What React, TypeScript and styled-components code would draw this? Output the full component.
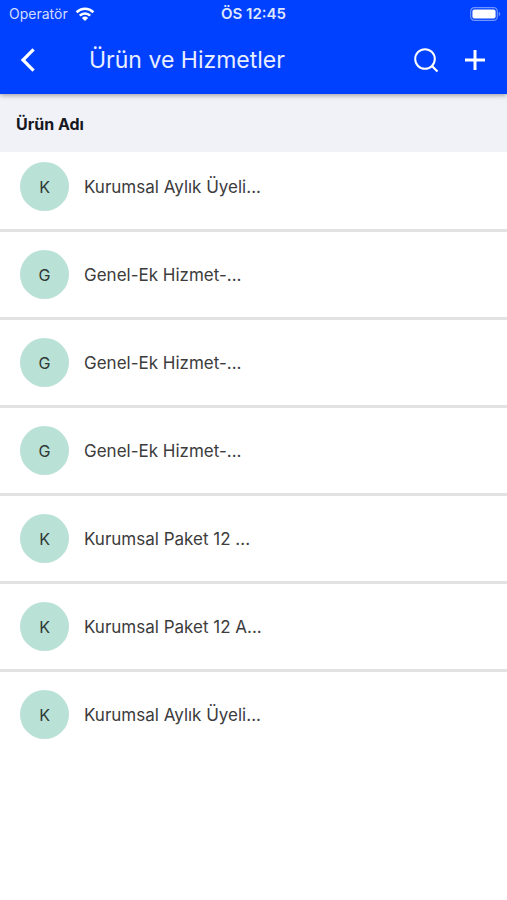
import React from "react";
import styled, { createGlobalStyle } from "styled-components";

const GlobalStyle = createGlobalStyle`
  *, *::before, *::after { box-sizing: border-box; }
  body {
    margin: 0;
    background: #fff;
    font-family: Inter, "Liberation Sans", sans-serif;
  }
`;

const Header = styled.header`
  position: relative;
  background: #0040ff;
  color: #fff;
  box-shadow: 0 1px 5px rgba(0, 0, 0, 0.4);
`;

const StatusBar = styled.div`
  display: grid;
  grid-template-columns: 1fr auto 1fr;
  align-items: center;
  height: 27px;
  padding: 0 6px;
  line-height: 20px;
`;

const Carrier = styled.div`
  display: flex;
  align-items: center;
  gap: 7px;
  padding-left: 3px;
  font-size: 14px;
  color: #d3deff;
`;

const Clock = styled.time`
  font-size: 15px;
  font-weight: 600;
  color: #dfe7ff;
`;

const BatterySlot = styled.div`
  display: flex;
  justify-content: flex-end;
`;

const Toolbar = styled.div`
  display: flex;
  align-items: center;
  height: 67px;
  padding: 0 8px 2px 4px;
`;

const IconButton = styled.button`
  display: flex;
  align-items: center;
  justify-content: center;
  width: 48px;
  height: 48px;
  padding: 0;
  border: 0;
  background: none;
  color: inherit;
  cursor: pointer;
`;

const Title = styled.h1`
  flex: 1;
  margin: 0;
  padding-left: 37px;
  font-size: 23px;
  line-height: 32px;
  font-weight: 400;
  color: #e9eeff;
`;

const Actions = styled.div`
  display: flex;
  gap: 1px;
`;

const ColumnHeading = styled.h2`
  margin: 0;
  padding: 18px 16px 16px;
  background: #f0f2f7;
  color: #17181f;
  font-size: 16px;
  line-height: 24px;
  font-weight: 700;
`;

const List = styled.ul`
  margin: 0;
  padding: 0;
  list-style: none;
`;

const Row = styled.li`
  display: flex;
  align-items: center;
  gap: 15px;
  padding: 18px 20px;
  border-bottom: 3px solid #e2e2e2;

  &:first-child { padding-top: 10px; }
  &:last-child { border-bottom: 0; }
`;

const Avatar = styled.span`
  display: flex;
  flex: none;
  align-items: center;
  justify-content: center;
  width: 49px;
  height: 49px;
  border-radius: 50%;
  background: #bae1d6;
  color: #2e3935;
  font-size: 16px;
  line-height: 24px;
`;

const ItemName = styled.span`
  color: #3c3c3c;
  font-size: 17px;
  line-height: 24px;
`;

const items = [
  "Kurumsal Aylık Üyeli...",
  "Genel-Ek Hizmet-...",
  "Genel-Ek Hizmet-...",
  "Genel-Ek Hizmet-...",
  "Kurumsal Paket 12 ...",
  "Kurumsal Paket 12 A...",
  "Kurumsal Aylık Üyeli...",
];

const WifiIcon = () => (
  <svg width="20" height="14" viewBox="0 0 20 14" fill="none" stroke="#fff" strokeWidth="2.6" aria-hidden="true">
    <path d="M1.6 5.2a12 12 0 0 1 16.8 0" />
    <path d="M4.8 8.6a7.4 7.4 0 0 1 10.4 0" />
    <path d="M10 14 6.9 10.9a4.4 4.4 0 0 1 6.2 0z" fill="#fff" stroke="none" />
  </svg>
);

const BatteryIcon = () => (
  <svg width="31" height="14" viewBox="0 0 31 14" fill="none" aria-hidden="true">
    <rect x="0.7" y="0.7" width="26.6" height="12.6" rx="3.6" stroke="#7095ff" strokeWidth="1.2" />
    <rect x="2.4" y="2.4" width="23.2" height="9.2" rx="2" fill="#fff" />
    <path d="M28.8 4.8c2 .8 2 3.6 0 4.4z" fill="#7095ff" />
  </svg>
);

const BackIcon = () => (
  <svg width="26" height="26" viewBox="0 0 26 26" fill="none" stroke="#fff" strokeWidth="3.2" aria-hidden="true">
    <path d="M18.6 2.4 8 13l10.6 10.6" />
  </svg>
);

const SearchIcon = () => (
  <svg width="26" height="26" viewBox="0 0 26 26" fill="none" stroke="#fff" strokeWidth="2" aria-hidden="true">
    <circle cx="12" cy="12" r="9.8" />
    <path d="m18.5 18.5 6 6" strokeWidth="2.2" />
  </svg>
);

const PlusIcon = () => (
  <svg width="24" height="24" viewBox="0 0 24 24" fill="none" stroke="#fff" strokeWidth="3" aria-hidden="true">
    <path d="M12 2v20M2 12h20" />
  </svg>
);

export default function App() {
  return (
    <>
      <GlobalStyle />
      <Header>
        <StatusBar>
          <Carrier>
            <span>Operatör</span>
            <WifiIcon />
          </Carrier>
          <Clock>ÖS 12:45</Clock>
          <BatterySlot>
            <BatteryIcon />
          </BatterySlot>
        </StatusBar>
        <Toolbar>
          <IconButton type="button" aria-label="Geri">
            <BackIcon />
          </IconButton>
          <Title>Ürün ve Hizmetler</Title>
          <Actions>
            <IconButton type="button" aria-label="Ara">
              <SearchIcon />
            </IconButton>
            <IconButton type="button" aria-label="Ekle">
              <PlusIcon />
            </IconButton>
          </Actions>
        </Toolbar>
      </Header>
      <main>
        <ColumnHeading>Ürün Adı</ColumnHeading>
        <List>
          {items.map((name, index) => (
            <Row key={index}>
              <Avatar aria-hidden="true">{name.charAt(0)}</Avatar>
              <ItemName>{name}</ItemName>
            </Row>
          ))}
        </List>
      </main>
    </>
  );
}
